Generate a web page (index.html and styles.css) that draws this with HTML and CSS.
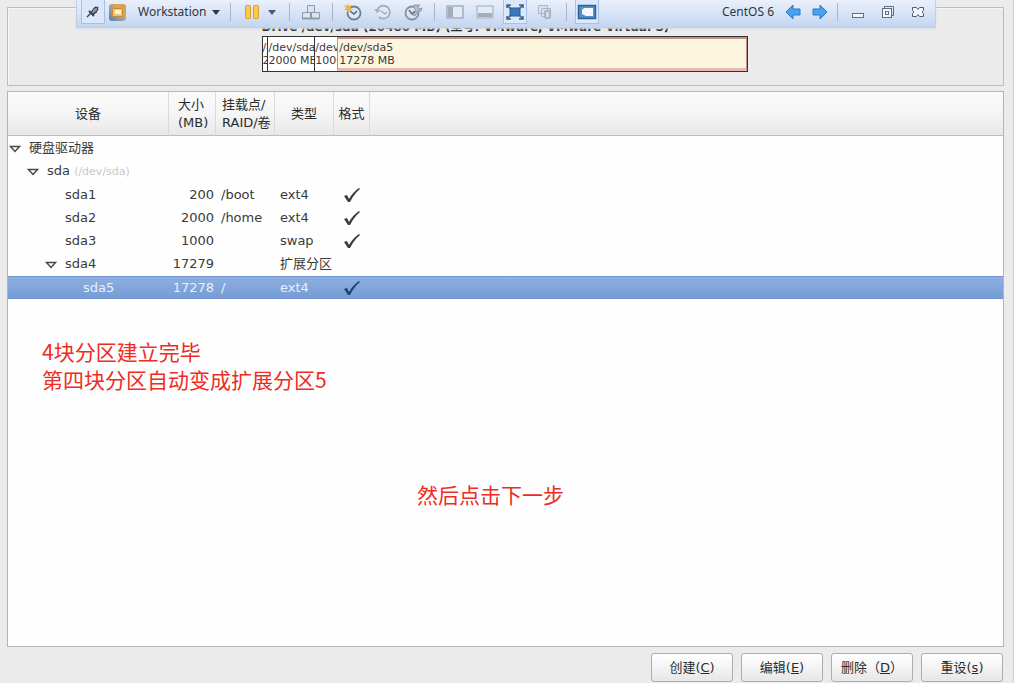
FILE: index.html
```html
<!DOCTYPE html>
<html lang="zh-CN">
<head>
<meta charset="utf-8">
<title>CentOS 6 - Workstation</title>
<link rel="stylesheet" href="styles.css">
</head>
<body>
<header class="toolbar">
  <button class="tool tool-framed" aria-label="Pin"><svg width="16" height="16" viewBox="0 0 16 16"><path d="M2 13l4-4" stroke="#333b48" stroke-width="1.3"/><path d="M4 7l5 5M6 9l5-5M10 3l3 3M9 5l2 3-3 2" stroke="#333b48" stroke-width="1.8" fill="none"/><path d="M9 4l4-1-1 4-4 3-2-1z" fill="#8b95a5" stroke="#333b48"/></svg></button>
  <span class="logo"><svg width="19" height="19" viewBox="0 0 19 19"><defs><linearGradient id="lg" x1="0" y1="1" x2="1" y2="0"><stop offset="0" stop-color="#4f80ae"/><stop offset=".4" stop-color="#8fa0a6"/><stop offset=".65" stop-color="#e0a552"/><stop offset="1" stop-color="#d99a45"/></linearGradient></defs><rect x="1" y="1" width="17" height="17" rx="3" fill="url(#lg)"/><rect x="4.500" y="5.500" width="10" height="8" rx="1" fill="#f2c66e" stroke="#c98d36"/><rect x="7" y="7" width="6" height="4" fill="#fff3cb"/></svg></span>
  <button class="menu">Workstation<svg width="8" height="5" viewBox="0 0 8 5"><path d="M0 0h8L4 5z" fill="#303846"/></svg></button>
  <span class="sep"></span>
  <button class="pause" aria-label="Pause"><svg width="16" height="16" viewBox="0 0 16 16"><rect x="1.500" y="1.500" width="5" height="13" rx="1" fill="#f8c94c" stroke="#d9a02c"/><rect x="9.500" y="1.500" width="5" height="13" rx="1" fill="#f8c94c" stroke="#d9a02c"/></svg><svg width="8" height="5" viewBox="0 0 8 5"><path d="M0 0h8L4 5z" fill="#4c5a70"/></svg></button>
  <span class="sep"></span>
  <button class="tool tool-wide" aria-label="Send Ctrl+Alt+Del"><svg width="20" height="18" viewBox="0 0 20 18"><g fill="#dbe3ee" stroke="#8d9aac"><path d="M6.500 2.500h7v7h-7zM1.500 9.500h8v6h-8zM10.500 9.500h8v6h-8z"/><path d="M1 15.500h17.500" stroke-width="2"/></g></svg></button>
  <span class="sep"></span>
  <div class="group">
    <button class="tool" aria-label="Take snapshot"><svg width="20" height="18" viewBox="0 0 20 18"><circle cx="11" cy="10" r="6.500" fill="#dfe9f4" stroke="#6c7f96" stroke-width="1.800"/><path d="M7 8l4 3 3-3" fill="none" stroke="#4d627b" stroke-width="1.500"/><path d="M5 0l1 3 3-1-1.500 3L10 7 7 7 5 10 4 7 1 7l2-2-2-3 3 1z" fill="#efb346"/></svg></button>
    <button class="tool" aria-label="Revert snapshot"><svg width="20" height="18" viewBox="0 0 20 18"><path d="M4 8a6.500 6.500 0 1 1 2 6" fill="#e2e9f3" stroke="#a2aebe" stroke-width="1.800"/><path d="M1 6l3 4 4-3z" fill="#a2aebe"/><path d="M8 8l4 3 2-2" fill="none" stroke="#a2aebe" stroke-width="1.500"/></svg></button>
    <button class="tool" aria-label="Manage snapshots"><svg width="20" height="18" viewBox="0 0 20 18"><circle cx="9" cy="10" r="6.500" fill="#dfe6ef" stroke="#8391a3" stroke-width="1.800"/><path d="M6 7l3 4 3-3" fill="none" stroke="#61728a" stroke-width="1.600"/><path d="M11 2v3l2 2-3 5 2 1 3-5h3l1-3-3 1-1-2 2-2h-3z" fill="#b5bfcc" stroke="#7d8b9e" stroke-width=".8"/></svg></button>
  </div>
  <span class="sep"></span>
  <div class="group">
    <button class="tool" aria-label="Show library"><svg width="18" height="16" viewBox="0 0 18 16"><rect x="1" y="2" width="16" height="12" fill="#e4eaf3" stroke="#a3afc0" stroke-width="1.500"/><rect x="2" y="3" width="5" height="10" fill="#a0acbd"/></svg></button>
    <button class="tool" aria-label="Show thumbnail bar"><svg width="18" height="16" viewBox="0 0 18 16"><rect x="1" y="2" width="16" height="12" fill="#e4eaf3" stroke="#b4bfce" stroke-width="1.500"/><path d="M2 9h14v4H2z" fill="#a0acbd"/></svg></button>
    <button class="tool tool-framed" aria-label="Full screen"><svg width="18" height="16" viewBox="0 0 18 16"><path d="M4 4h10v8H4z" fill="#3978b9" stroke="#286098"/><path d="M1 4V1h4M13 1h4v3M17 12v3h-4M5 15H1v-3M1 1l4 4M17 1l-4 4M17 15l-4-4M1 15l4-4" fill="none" stroke="#465c78" stroke-width="1.500"/></svg></button>
    <button class="tool" aria-label="Unity"><svg width="18" height="18" viewBox="0 0 18 18"><path d="M2.500 2.500h9v8h-9zM5.500 5.500h9v8h-9z" fill="#dbe2ec" stroke="#aab5c5"/><rect x="8" y="7" width="7" height="9" rx="2" fill="#aab5c4"/><path d="M11.500 9v5" stroke="#e7edf5" stroke-width="2"/></svg></button>
  </div>
  <span class="sep"></span>
  <div class="group">
    <button class="tool tool-framed" aria-label="Console view"><svg width="20" height="16" viewBox="0 0 20 16"><rect x="1.500" y="1.500" width="17" height="13" fill="#5590c6" stroke="#2b6198" stroke-width="1.500"/><path d="M7 4h9v8H9L5 10V6z" fill="#f3f8fc"/></svg></button>
  </div>
  <span class="vm-name">CentOS 6</span>
  <button class="nav" aria-label="Previous"><svg width="16" height="16" viewBox="0 0 16 16"><path d="M1 8l7-7v4h7v6H8v4z" fill="#4aa2ee" stroke="#2b7bcb"/></svg></button>
  <button class="nav nav-last" aria-label="Next"><svg width="16" height="16" viewBox="0 0 16 16"><path d="M15 8L8 1v4H1v6h7v4z" fill="#4aa2ee" stroke="#2b7bcb"/></svg></button>
  <span class="sep"></span>
  <div class="group window-controls">
    <button class="tool" aria-label="Minimize"><svg width="14" height="14" viewBox="0 0 14 14"><rect x="1.500" y="8.500" width="11" height="4" fill="#f4f7fb" stroke="#626e80"/></svg></button>
    <button class="tool" aria-label="Restore"><svg width="14" height="14" viewBox="0 0 14 14"><path d="M3.500 3V1.500h9v9H11" fill="none" stroke="#626e80"/><rect x="1.500" y="3.500" width="9" height="9" fill="#f4f7fb" stroke="#626e80"/><rect x="4.500" y="6.500" width="3" height="3" fill="none" stroke="#626e80"/></svg></button>
    <button class="tool" aria-label="Close"><svg width="14" height="14" viewBox="0 0 14 14"><path d="M1.500 2.500h4L7 4.500l1.500-2h4v3L11 7l1.500 1.500v3h-4L7 9.500l-1.500 2h-4v-3L3 7 1.500 5.500z" fill="#f4f7fb" stroke="#535f70"/></svg></button>
  </div>
</header>

<main class="installer">
  <section class="drive">
    <div class="drive-map">
      <h1 class="drive-title">Drive /dev/sda (20480 MB) (型号: VMware, VMware Virtual S)</h1>
      <div class="disk">
        <div class="part part-1">/dev/sda1<br>200 MB</div>
        <div class="part part-2">/dev/sda2<br>2000 MB</div>
        <div class="part part-3">/dev/sda3<br>1000 MB</div>
        <div class="part part-5">/dev/sda5<br>17278 MB</div>
      </div>
    </div>
  </section>

  <section class="panel">
    <table class="tree">
      <colgroup><col class="c-device"><col class="c-size"><col class="c-mount"><col class="c-type"><col class="c-format"><col></colgroup>
      <thead>
        <tr><th>设备</th><th class="left">大小<br>(MB)</th><th class="left">挂载点/<br>RAID/卷</th><th>类型</th><th>格式</th><th></th></tr>
      </thead>
      <tbody>
        <tr class="tall"><td class="level-0"><button class="expander" aria-label="折叠"><svg width="12" height="8" viewBox="0 0 12 8"><path d="M1.500 1.500h9L6 6.500z" fill="#fff" stroke="#4a4a4a" stroke-width="1.500"/></svg></button>硬盘驱动器</td><td></td><td></td><td></td><td></td><td></td></tr>
        <tr><td class="level-1"><button class="expander" aria-label="折叠"><svg width="12" height="8" viewBox="0 0 12 8"><path d="M1.500 1.500h9L6 6.500z" fill="#fff" stroke="#4a4a4a" stroke-width="1.500"/></svg></button>sda <small>(/dev/sda)</small></td><td></td><td></td><td></td><td></td><td></td></tr>
        <tr><td class="level-2">sda1</td><td class="num">200</td><td>/boot</td><td>ext4</td><td class="mark"><svg width="18" height="16" viewBox="0 0 18 16"><path d="M1 9l3-1 2 4Q10 5 16 1l1 1Q11 7 7 15H5z" fill="#3c3c3c"/></svg></td><td></td></tr>
        <tr><td class="level-2">sda2</td><td class="num">2000</td><td>/home</td><td>ext4</td><td class="mark"><svg width="18" height="16" viewBox="0 0 18 16"><path d="M1 9l3-1 2 4Q10 5 16 1l1 1Q11 7 7 15H5z" fill="#3c3c3c"/></svg></td><td></td></tr>
        <tr><td class="level-2">sda3</td><td class="num">1000</td><td></td><td>swap</td><td class="mark"><svg width="18" height="16" viewBox="0 0 18 16"><path d="M1 9l3-1 2 4Q10 5 16 1l1 1Q11 7 7 15H5z" fill="#3c3c3c"/></svg></td><td></td></tr>
        <tr class="tall"><td class="level-2b"><button class="expander" aria-label="折叠"><svg width="12" height="8" viewBox="0 0 12 8"><path d="M1.500 1.500h9L6 6.500z" fill="#fff" stroke="#4a4a4a" stroke-width="1.500"/></svg></button>sda4</td><td class="num">17279</td><td></td><td>扩展分区</td><td></td><td></td></tr>
        <tr class="selected"><td class="level-3">sda5</td><td class="num">17278</td><td>/</td><td>ext4</td><td class="mark"><svg width="18" height="16" viewBox="0 0 18 16"><path d="M1 9l3-1 2 4Q10 5 16 1l1 1Q11 7 7 15H5z" fill="#1f4672"/></svg></td><td></td></tr>
      </tbody>
    </table>
    <p class="note">4块分区建立完毕<br>第四块分区自动变成扩展分区5</p>
    <p class="note note-next">然后点击下一步</p>
  </section>

  <footer class="actions">
    <button class="action">创建(<u>C</u>)</button>
    <button class="action">编辑(<u>E</u>)</button>
    <button class="action">删除（<u>D</u>）</button>
    <button class="action">重设(<u>s</u>)</button>
  </footer>
</main>
</body>
</html>
```
FILE: styles.css
```css
* { box-sizing: border-box; }

body {
  margin: 0;
  background: #ecebeb;
  color: #3a3a3a;
  font: 13px/18px "DejaVu Sans", "Noto Sans CJK SC", sans-serif;
}

button {
  margin: 0;
  padding: 0;
  border: 0;
  background: none;
  color: inherit;
  font: inherit;
}

svg { display: block; flex: none; }

/* Floating full-screen toolbar */
.toolbar {
  position: absolute;
  top: 0;
  left: 76px;
  right: 78px;
  height: 28px;
  padding: 0 2px 3px 4px;
  display: flex;
  align-items: center;
  border: 1px solid #c3d0e6;
  border-top: 0;
  background: linear-gradient(#e9f0fb, #d7e3f6 50%, #c5d5ef);
  box-shadow: 0 1px 2px #d5dcea;
  color: #2f3642;
  font: 12px/16px "Noto Sans", "Noto Sans CJK SC", sans-serif;
}

.tool {
  width: 24px;
  height: 24px;
  margin: 0 3px;
  display: flex;
  align-items: center;
  justify-content: center;
  border: 1px solid transparent;
}

.toolbar > .tool { margin: 0; }
.toolbar > .tool-wide { width: 42px; }
.tool-framed { border: 1px solid #a9c0e6; border-top: 0; background: #dbe8fb; }
.logo { width: 25px; display: flex; justify-content: center; }
.menu { display: flex; align-items: center; gap: 6px; padding: 0 10px 0 8px; }
.pause { display: flex; align-items: center; gap: 8px; padding: 0 13px; }
.sep { width: 1px; height: 18px; flex: none; background: #a9b7cd; }
.group { display: flex; padding: 0 6px 0 5px; }
.window-controls { padding: 0 0 0 5px; }
.vm-name { margin-left: auto; padding-right: 5px; }
.nav { width: 27px; display: flex; justify-content: center; }
.nav-last { margin-right: 4px; }

/* Installer page */
.installer {
  min-height: 100vh;
  padding: 7px 9px 0 7px;
  display: flex;
  flex-direction: column;
  border-right: 1px solid #d2d2d2;
}

.drive {
  height: 79px;
  padding: 10px 2px 0 0;
  border: 1px solid #bdbdbd;
  box-shadow: inset 1px 1px #f6f6f6;
}

.drive-map { max-width: 486px; margin: 0 auto; }

.drive-title {
  margin: 0;
  color: #222;
  font-size: 12px;
  line-height: 18px;
  white-space: nowrap;
}

.disk {
  height: 36px;
  display: grid;
  grid-template-columns: 5fr 47fr 23fr 411fr;
  border: 1px solid #333;
  background: #fff;
  font-size: 11px;
  line-height: 13px;
}

.part {
  min-width: 0;
  padding: 4px 0 0;
  overflow: hidden;
  white-space: nowrap;
}

.part + .part { border-left: 1px solid #333; }
.part.part-5 { border: 2px solid #c98d86; border-width: 2px 1px 3px; border-bottom-color: #e8b8b4; padding: 2px 0 0 1px; background: #fdf6df; }

.panel {
  flex: 1;
  margin-top: 5px;
  border: 1px solid #b5b5b5;
  background: #fefefe;
}

.tree { width: 100%; table-layout: fixed; border-collapse: separate; border-spacing: 0; }
.c-device { width: 161px; }
.c-size { width: 47px; }
.c-mount { width: 59px; }
.c-type { width: 59px; }
.c-format { width: 36px; }

.tree th {
  height: 44px;
  padding: 0;
  border-bottom: 1px solid #bdbdbd;
  background: linear-gradient(#fafafa, #f5f5f5 50%, #e8e8e8);
  color: #2c2c2c;
  font-weight: 400;
}

.tree th.left { padding-left: 9px; text-align: left; }
.tree th.left + .left { padding-left: 6px; }
.tree th:not(:last-child) { border-right: 1px solid #dadada; }

.tree td { height: 23px; padding: 0 0 0 5px; white-space: nowrap; }
.tree .tall td { height: 24px; }
.tree .num { padding: 0 2px 0 0; text-align: right; }
.tree .mark svg { margin: 0 4px; }
.tree .level-0 { padding-left: 1px; }
.tree .level-1 { padding-left: 19px; }
.tree .level-2 { padding-left: 57px; }
.tree .level-2b { padding-left: 37px; }
.tree .level-3 { padding-left: 75px; }
.tree small { color: #c9c9c9; font-size: 11px; }
.expander { display: inline-block; margin-right: 8px; vertical-align: middle; }

.selected td {
  border-top: 1px solid #7396cf;
  border-bottom: 1px solid #6f93cd;
  background: linear-gradient(#8dafe1, #779bd5);
  color: #e6effb;
}

.note {
  margin: 38px 0 0 34px;
  color: #ee2c24;
  font: 21px/28px "Noto Sans CJK SC", sans-serif;
}

.note-next { margin: 87px 0 0 409px; }

.actions {
  height: 36px;
  padding: 6px 1px 0 0;
  display: flex;
  justify-content: flex-end;
  gap: 8px;
}

.action {
  width: 82px;
  height: 29px;
  border: 1px solid #adadad;
  border-radius: 3px;
  background: linear-gradient(#fff, #f4f4f4 50%, #e6e6e6);
  color: #2c2c2c;
  white-space: nowrap;
}
```
